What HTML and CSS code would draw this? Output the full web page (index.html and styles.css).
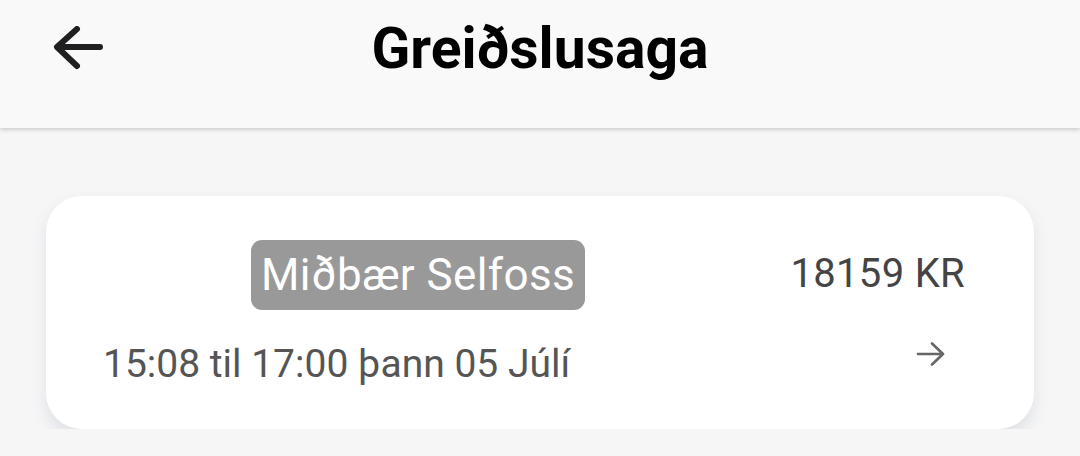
FILE: index.html
```html
<!DOCTYPE html>
<html>
<head>
	<title>Greiðslusaga</title>
	<link rel="stylesheet" href="styles.css">
</head>
<body>
	<div class="topbar">
		<div class="topbar-row">
			<a class="back" href="#">
				<svg width="50" height="46" viewBox="0 0 50 46">
					<path d="M47 21H5M24 3L4 21L24 40" fill="none" stroke="#1f1f22" stroke-width="6" stroke-linecap="round" stroke-linejoin="round"/>
				</svg>
			</a>
			<h1>Greiðslusaga</h1>
		</div>
	</div>
	<div class="list">
		<div class="card">
			<div class="card-row">
				<div class="thumb"></div>
				<span class="badge">Miðbær Selfoss</span>
				<span class="amount">18159 KR</span>
			</div>
			<div class="card-row second">
				<span class="when">15:08 til 17:00 þann 05 Júlí</span>
				<svg class="go" width="30" height="26" viewBox="0 0 30 26">
					<path d="M2 12H27M16 1.5L27 12L16 22.5" fill="none" stroke="#666" stroke-width="2.6" stroke-linecap="round" stroke-linejoin="round"/>
				</svg>
			</div>
		</div>
	</div>
</body>
</html>
```
FILE: styles.css
```css
html{
	background-color: #f6f6f7;
}
body{
	margin: 0;
	font-family: Roboto, "Liberation Sans", sans-serif;
}
.topbar{
	height: 128px;
	background-color: #f9f9f9;
	box-shadow: 0 2px 4px rgba(0,0,0,0.16);
	position: relative;
}
.topbar-row{
	height: 96px;
	display: flex;
	align-items: center;
	justify-content: center;
	position: relative;
}
.back{
	position: absolute;
	left: 53px;
	top: 26px;
	display: block;
	width: 50px;
	height: 46px;
}
.topbar h1{
	margin: 0;
	font-size: 57px;
	font-weight: bold;
	color: #000;
	line-height: 1;
}
.list{
	padding: 68px 46px 0;
}
.card{
	background-color: #fff;
	border-radius: 36px;
	box-shadow: 0 8px 16px rgba(70,85,110,0.13);
	padding: 44px 69px 45px 57px;
}
.card-row{
	display: flex;
	align-items: center;
}
.thumb{
	width: 148px;
	height: 70px;
}
.badge{
	background-color: #999;
	color: #fff;
	font-size: 44px;
	letter-spacing: 0.4px;
	line-height: 70px;
	padding: 0 10px;
	border-radius: 11px;
}
.amount{
	margin-left: auto;
	font-size: 40px;
	letter-spacing: 0.3px;
	color: #444;
	margin-top: -4px;
}
.second{
	margin-top: 30px;
	height: 44px;
}
.when{
	font-size: 39px;
	color: #555;
	padding-top: 4px;
}
.go{
	margin-left: auto;
	margin-right: 19px;
	margin-top: -14px;
}
```
